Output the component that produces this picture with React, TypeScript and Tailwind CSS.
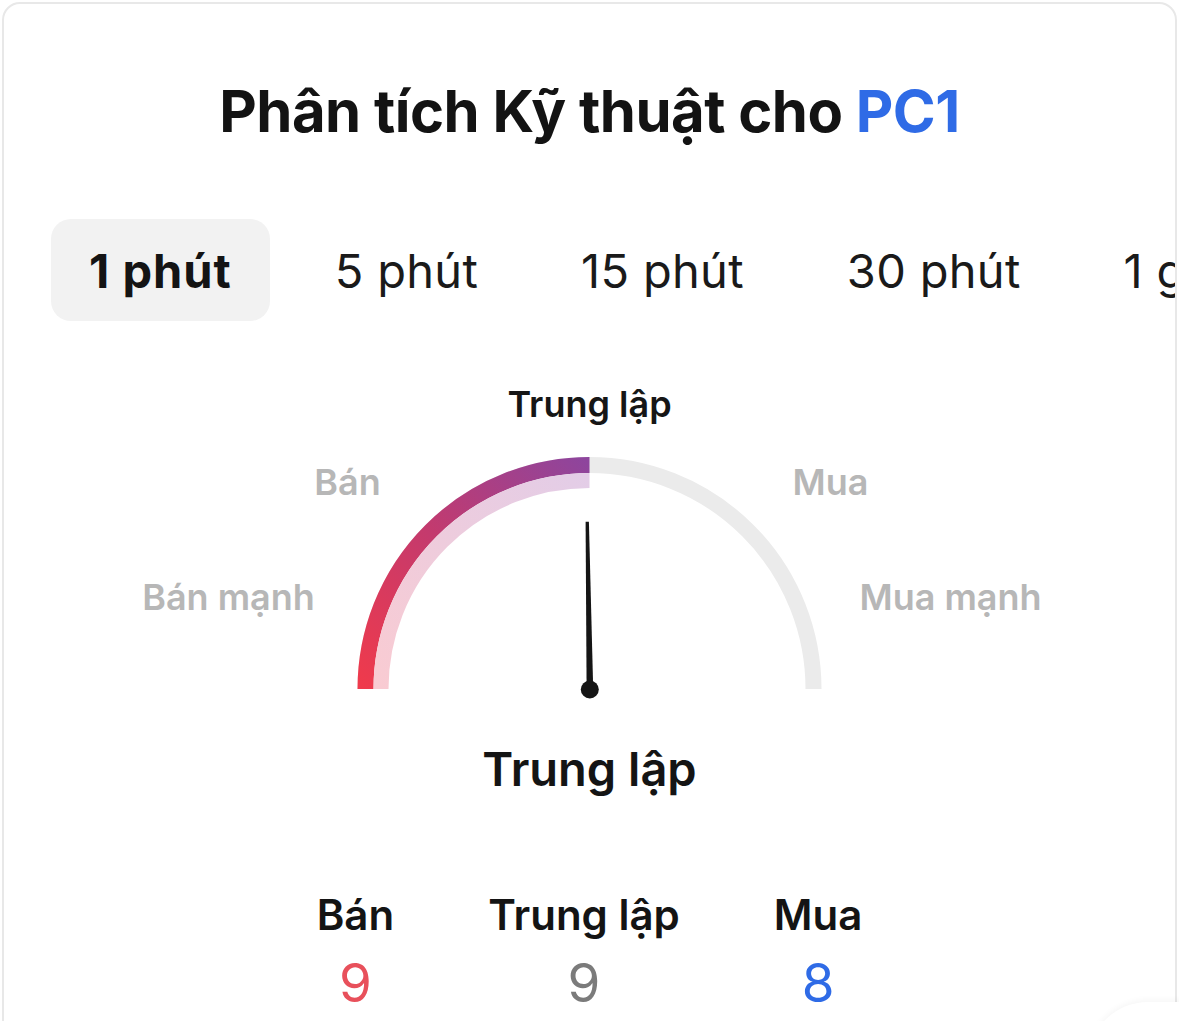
import React from 'react';

const tabs = ['1 phút', '5 phút', '15 phút', '30 phút', '1 giờ'];

const CX = 585.5;
const CY = 319;

const arc = (r: number, toRight: boolean) =>
  toRight
    ? `M ${CX - r} ${CY} A ${r} ${r} 0 0 1 ${CX + r} ${CY}`
    : `M ${CX - r} ${CY} A ${r} ${r} 0 0 1 ${CX} ${CY - r}`;

// labels around the dial: [text, x offset from center, baseline, active]
const dialLabels: [string, number, number, boolean][] = [
  ['Trung lập', 0, 47, true],
  ['Bán', -242, 125, false],
  ['Mua', 241, 125, false],
  ['Bán mạnh', -361, 240, false],
  ['Mua mạnh', 361, 240, false],
];

const Gauge: React.FC = () => (
  <svg className="mt-[49px] block font-semibold" width="100%" height="340" viewBox="0 0 1171 340">
    <defs>
      <linearGradient id="outerBand" gradientUnits="userSpaceOnUse" x1={CX - 224} y1={CY} x2={CX} y2={CY - 224}>
        <stop offset="0" stopColor="#ef3a4c" />
        <stop offset="0.5" stopColor="#c33a6e" />
        <stop offset="1" stopColor="#8e459d" />
      </linearGradient>
      <linearGradient id="innerBand" gradientUnits="userSpaceOnUse" x1={CX - 208} y1={CY} x2={CX} y2={CY - 208}>
        <stop offset="0" stopColor="#f9cbd2" />
        <stop offset="1" stopColor="#e3cde7" />
      </linearGradient>
    </defs>
    <path d={arc(224, true)} fill="none" stroke="#ebebeb" strokeWidth="16" />
    <path d={arc(224, false)} fill="none" stroke="url(#outerBand)" strokeWidth="16" />
    <path d={arc(208.5, false)} fill="none" stroke="url(#innerBand)" strokeWidth="15" />
    <polygon points="581.6,151.7 584.9,151.7 589.2,319 582.6,319" fill="#151515" />
    <circle cx="585.8" cy="319.5" r="9" fill="#151515" />
    {dialLabels.map(([t, dx, y, active]) => (
      <text
        key={t}
        x={CX + dx}
        y={y}
        textAnchor="middle"
        fontSize="36"
        fill={active ? '#161616' : '#b7b7b7'}
      >
        {t}
      </text>
    ))}
  </svg>
);

const Count: React.FC<{ label: string; value: number; color: string }> = ({ label, value, color }) => (
  <div className="flex flex-col items-center">
    <div className="whitespace-nowrap text-[42px] font-semibold leading-[50px] text-[#141414]">{label}</div>
    <div className={`mt-[11px] text-[53px] font-normal leading-[64px] ${color}`}>{value}</div>
  </div>
);

export default function App() {
  return (
    <div className="relative h-[1021px] w-[1179px] overflow-hidden bg-white px-[2px] pt-[2px] font-['Inter','Noto_Sans',sans-serif]">
      <div className="h-[1100px] overflow-hidden rounded-[18px] border-2 border-[#e8e8e8] bg-white">
        <h1 className="pt-[72px] text-center text-[58px] font-bold leading-[70px] tracking-[-0.5px] text-[#131313]">
          Phân tích Kỹ thuật cho <span className="text-[#2f6be6]">PC1</span>
        </h1>

        <div className="mt-[73px] flex gap-[27px] pl-[47px]">
          {tabs.map((t, i) => (
            <div
              key={t}
              className={`flex h-[102px] shrink-0 items-center whitespace-nowrap rounded-[20px] px-[38px] text-[47px] leading-none ${
                i === 0 ? 'bg-[#f2f2f2] font-bold tracking-[1px] text-[#141414]' : 'font-normal tracking-[0.3px] text-[#1a1a1a]'
              }`}
            >
              {t}
            </div>
          ))}
        </div>

        <Gauge />

        <div className="mt-[31px] text-center text-[47px] font-semibold leading-[56px] text-[#141414]">Trung lập</div>

        <div className="mt-[93px] flex justify-center gap-[94px]">
          <Count label="Bán" value={9} color="text-[#e8505b]" />
          <Count label="Trung lập" value={9} color="text-[#7b7b7b]" />
          <Count label="Mua" value={8} color="text-[#2f6be6]" />
        </div>
      </div>
      <div className="absolute left-[1088px] top-[1002px] h-[80px] w-[200px] rounded-tl-[60px] bg-white shadow-[0_-2px_6px_rgba(0,0,0,0.04)]" />
    </div>
  );
}
